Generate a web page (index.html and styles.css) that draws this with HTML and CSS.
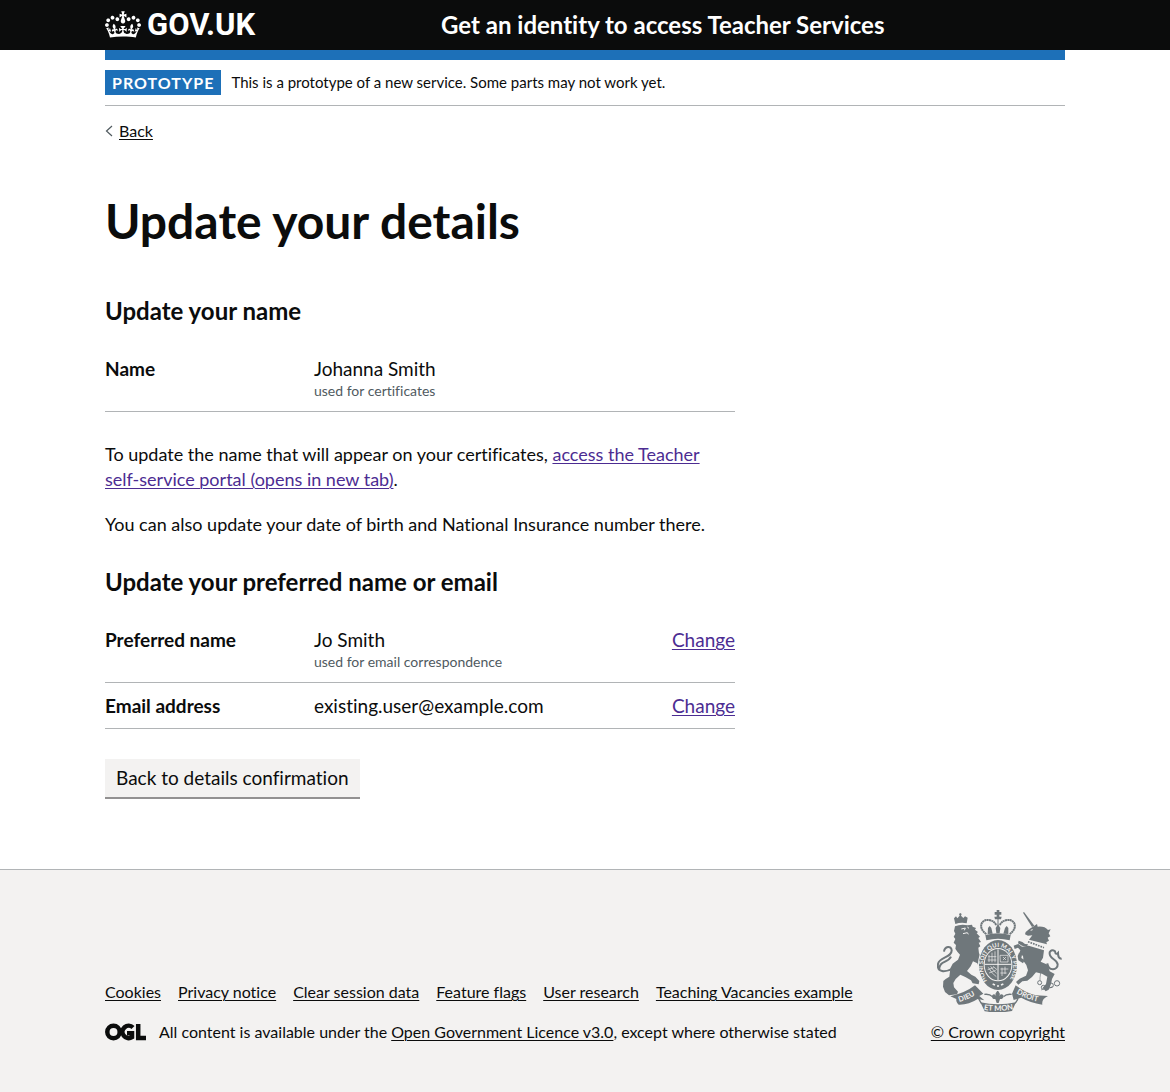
FILE: index.html
```html
<!DOCTYPE html>
<html lang="en">
<head>
<meta charset="utf-8">
<meta name="viewport" content="width=device-width, initial-scale=1">
<title>Update your details - Get an identity to access Teacher Services</title>
<link rel="stylesheet" href="styles.css">
</head>
<body>
<header class="header">
  <div class="container header-inner">
    <a class="header-logo" href="#">
      <svg class="crown" viewBox="0 0 132 97" aria-hidden="true"><path fill="currentColor" fill-rule="evenodd" d="M25 30.2c3.5 1.5 7.7-.2 9.1-3.7 1.5-3.6-.2-7.8-3.9-9.2-3.6-1.4-7.6.3-9.1 3.9-1.4 3.5.3 7.5 3.9 9zM9 39.5c3.6 1.5 7.8-.2 9.2-3.7 1.5-3.6-.2-7.8-3.9-9.1-3.6-1.5-7.6.2-9.1 3.8-1.4 3.5.3 7.5 3.8 9zM4.4 57.2c3.5 1.5 7.7-.2 9.1-3.8 1.5-3.6-.2-7.7-3.9-9.1-3.5-1.5-7.6.3-9.1 3.8-1.4 3.5.3 7.6 3.9 9.1zm38.3-21.4c3.5 1.5 7.7-.2 9.1-3.8 1.5-3.6-.2-7.7-3.9-9.1-3.6-1.5-7.6.3-9.1 3.8-1.3 3.6.4 7.7 3.9 9.1zm64.4-5.6c-3.6 1.5-7.8-.2-9.1-3.7-1.5-3.6.2-7.8 3.8-9.2 3.6-1.4 7.7.3 9.2 3.9 1.3 3.5-.4 7.5-3.9 9zm15.9 9.3c-3.6 1.5-7.7-.2-9.1-3.7-1.5-3.6.2-7.8 3.7-9.1 3.6-1.5 7.7.2 9.2 3.8 1.5 3.5-.3 7.5-3.8 9zm4.7 17.7c-3.6 1.5-7.8-.2-9.2-3.8-1.5-3.6.2-7.7 3.9-9.1 3.6-1.5 7.7.3 9.2 3.8 1.3 3.5-.4 7.6-3.9 9.1zM89.3 35.8c-3.6 1.5-7.8-.2-9.2-3.8-1.4-3.6.2-7.7 3.9-9.1 3.6-1.5 7.7.3 9.2 3.8 1.4 3.6-.3 7.7-3.9 9.1zM69.7 17.7l8.9 4.7V9.3l-8.9 2.8c-.2-.3-.5-.6-.9-.9L72.4 0H59.6l3.5 11.2c-.3.3-.6.5-.9.9l-8.8-2.8v13.1l8.8-4.7c.3.3.6.7.9.9l-5 15.4v.1c-.2.8-.4 1.6-.4 2.4 0 4.1 3.1 7.5 7 8.1h.2c.3 0 .7.1 1 .1.4 0 .7 0 1-.1h.2c4-.6 7.1-4.1 7.1-8.1 0-.8-.1-1.7-.4-2.4V34l-5.1-15.4c.4-.2.7-.6 1-.9zM66 92.8c16.9 0 32.8 1.1 47.1 3.2 4-16.9 8.9-26.7 14-33.5l-9.6-3.4c1 4.9 1.1 7.2 0 10.2-1.5-1.4-3-4.3-4.2-8.7L108.6 76c2.8-2 5-3.2 7.5-3.3-4.4 9.4-10 11.9-13.6 11.2-4.3-.8-6.3-4.6-5.6-7.9 1-4.7 5.7-5.9 8-.5 4.3-8.7-3-11.4-7.6-8.8 7.1-7.2 7.9-13.5 2.1-21.1-8 6.1-8.1 12.3-4.5 20.8-4.7-5.4-12.1-2.5-9.5 6.2 3.4-5.2 7.9-2 7.2 3.1-.6 4.3-6.4 7.8-13.5 7.2-10.3-.9-10.9-8-11.2-13.8 2.5-.5 7.1 1.8 11 7.3L80.2 60c-4.1 4.4-8 5.3-12.3 5.4 1.4-4.4 8-11.6 8-11.6H55.5s6.4 7.2 7.9 11.6c-4.2-.1-8-1-12.3-5.4l1.4 16.4c3.9-5.5 8.5-7.7 10.9-7.3-.3 5.8-.9 12.8-11.1 13.8-7.2.6-12.9-2.9-13.5-7.2-.7-5 3.8-8.3 7.1-3.1 2.7-8.7-4.6-11.6-9.4-6.2 3.7-8.5 3.6-14.7-4.6-20.8-5.8 7.6-5 13.9 2.2 21.1-4.7-2.6-11.9.1-7.7 8.8 2.3-5.5 7.1-4.2 8.1.5.7 3.3-1.3 7.1-5.7 7.9-3.5.7-9-1.8-13.5-11.2 2.5.1 4.7 1.3 7.5 3.3l-4.7-15.4c-1.2 4.4-2.7 7.2-4.3 8.7-1.1-3-.9-5.3 0-10.2l-9.5 3.4c5 6.9 9.9 16.7 14 33.5 14.8-2.1 30.8-3.2 47.7-3.2z"/></svg>
      <span>GOV.UK</span>
    </a>
    <a class="header-service" href="#">Get an identity to access Teacher Services</a>
  </div>
</header>

<div class="container">
  <div class="phase-banner">
    <strong class="tag">PROTOTYPE</strong>
    <span>This is a prototype of a new service. Some parts may not work yet.</span>
  </div>
  <a class="back-link" href="#">
    <svg viewBox="0 0 8 12" aria-hidden="true"><path d="M7 1L1.500 6L7 11" fill="none" stroke="currentColor" stroke-width="1.200"/></svg>
    <span>Back</span>
  </a>

  <main class="main">
    <div class="main-column">
      <h1>Update your details</h1>

      <h2>Update your name</h2>
      <dl class="summary">
        <div class="summary-row">
          <dt>Name</dt>
          <dd>Johanna Smith<span class="hint">used for certificates</span></dd>
        </div>
      </dl>

      <p>To update the name that will appear on your certificates, <a class="link" href="#">access the Teacher self-service portal (opens in new tab)</a>.</p>
      <p>You can also update your date of birth and National Insurance number there.</p>

      <h2 class="next-section">Update your preferred name or email</h2>
      <dl class="summary">
        <div class="summary-row">
          <dt>Preferred name</dt>
          <dd>Jo Smith<span class="hint">used for email correspondence</span></dd>
          <dd class="action"><a class="link" href="#" aria-label="Change preferred name">Change</a></dd>
        </div>
        <div class="summary-row">
          <dt>Email address</dt>
          <dd>existing.user@example.com</dd>
          <dd class="action"><a class="link" href="#" aria-label="Change email address">Change</a></dd>
        </div>
      </dl>

      <button class="button" type="button">Back to details confirmation</button>
    </div>
  </main>
</div>

<footer class="footer">
  <div class="container footer-inner">
    <div class="footer-meta">
      <ul class="footer-links">
        <li><a href="#">Cookies</a></li>
        <li><a href="#">Privacy notice</a></li>
        <li><a href="#">Clear session data</a></li>
        <li><a href="#">Feature flags</a></li>
        <li><a href="#">User research</a></li>
        <li><a href="#">Teaching Vacancies example</a></li>
      </ul>
      <div class="licence">
        <svg class="ogl" viewBox="0 0 41 18" role="img" aria-label="Open Government Licence">
          <g fill="none" stroke="currentColor" stroke-width="4.500">
            <circle cx="8.500" cy="9" r="6.200"/>
            <path d="M28 4.500A6.200 6.200 0 1 0 27 14.200V10.200H22M33.200 1V15H41"/>
          </g>
        </svg>
        <span>All content is available under the <a href="#">Open Government Licence v3.0</a>, except where otherwise stated</span>
      </div>
    </div>
    <a class="copyright" href="#">
      <svg class="crest" viewBox="36 30 375 306" aria-hidden="true">
        <defs>
          <path id="garter" d="M189 246A45 60 0 1 1 249 246"/>
          <path id="scroll-left" d="M103 306Q136 297 164 275"/>
          <path id="scroll-mid" d="M176 329Q218 337 268 327"/>
          <path id="scroll-right" d="M274 280Q304 298 345 306"/>
        </defs>
        <g fill="currentColor">
          <!-- lion with its crown -->
          <path d="M91 72L87 55L93 49L97 55L104 47L102 42L106 39L110 42L108 47L115 54L120 49L128 53L125 70Q108 66 91 72Z"/>
          <path d="M90 79Q108 71 128 76L141 74L143 80L153 84L150 89L159 96L155 100L165 110L160 114L168 126L161 128L166 139L160 143L162 160L173 180L171 207L180 224L168 216L157 190L144 184L137 199L126 213L139 224L151 230L163 243L161 253L143 250L138 241L121 231L106 224L92 237L85 249L87 262L99 275L96 283L72 286L60 276L54 260L55 243L62 237L73 230L76 205L83 191L99 179L105 164L97 155L91 146L93 135L86 128L91 117L86 110L91 101L87 93Z"/>
          <!-- central crown -->
          <path d="M215 30H223V36H229V44H223V50H230L228 58H210L208 50H215V44H209V36H215Z"/>
          <path d="M181 105Q219 95 257 105L254 121Q219 111 184 121Z"/>
          <path d="M188 102L189 84L194 78L199 84L203 101ZM214 99L212 84L219 73L226 84L224 99ZM235 101L240 84L245 78L250 84L250 102Z"/>
          <!-- unicorn -->
          <path d="M297 36L328 77L321 81L294 38Z"/>
          <path d="M326 79L336 72L338 80Q359 78 369 90L377 88L371 100L376 109L368 113L372 122L364 127L366 133L312 119L322 106L309 107L300 103L302 96L313 87Z"/>
          <path d="M311 137L357 151L354 173L347 185L368 194L374 214L389 222L381 237L378 252L371 269L362 274L353 263L363 252L367 230L351 221L333 217L321 231L307 242L292 244L280 254L273 246L284 236L303 227L309 211L304 195L296 184L294 168L283 159L286 151L279 143L269 147L266 137L280 132L291 140Z"/>
          <path d="M281 122L292 126L300 132L309 133L306 140L291 137L279 130ZM282 158L292 160L289 174L299 180L294 190L280 181L278 168Z"/>
          <!-- motto scroll -->
          <path d="M76 289Q122 278 150 256L175 281L163 288L178 301L158 297Q131 315 101 314Q92 305 94 297Z"/>
          <path d="M272 256Q303 280 333 286L369 288Q349 297 352 314Q315 308 289 293L266 300L261 281Z"/>
          <path d="M166 307Q219 319 273 307L261 333Q219 341 179 334Z"/>
          <!-- plant beneath the shield -->
          <path d="M218 270L225 282L222 289Q228 278 236 287Q236 297 225 297L221 309H215L211 297Q200 298 201 287Q208 278 214 289L211 282Z"/>
        </g>
        <g fill="none" stroke="currentColor">
          <path stroke-width="6" stroke-dasharray="6 1" d="M184 102C157 83 169 58 190 60Q207 61 214 76M254 102C281 83 269 58 248 60Q231 61 224 76"/>
          <path stroke-width="3" d="M219 57V78"/>
          <path stroke-width="6" d="M85 205C60 218 35 218 39 192C43 170 81 174 80 151C79 136 59 138 57 155M43 211C40 182 69 190 78 170"/>
          <path stroke-width="6" d="M367 190C370 215 399 211 398 193C397 177 370 177 374 157Q380 146 390 154Q392 166 399 159Q399 177 410 176"/>
          <path stroke-width="2" d="M348 270Q364 266 369 253M359 261Q377 269 382 258M347 219Q344 236 345 242"/>
          <g stroke-width="3"><circle cx="344" cy="248" r="6"/><circle cx="355" cy="262" r="6"/><circle cx="378" cy="256" r="7"/><circle cx="396" cy="250" r="8"/><circle cx="358" cy="209" r="5"/></g>
          <path stroke-width="5" stroke-dasharray="5 3" d="M309 125L357 143"/>
          <path stroke-width="4" d="M162 276Q154 289 169 310M275 276Q286 293 270 310M178 283Q194 281 202 290M260 283Q244 281 236 290"/>
        </g>
        <!-- garter and quartered shield -->
        <ellipse cx="219" cy="195" rx="60" ry="78" class="crest-gap"/>
        <ellipse cx="219" cy="195" rx="57" ry="75" fill="currentColor"/>
        <ellipse cx="219" cy="194" rx="43" ry="50" class="crest-gap"/>
        <ellipse cx="219" cy="194" rx="40" ry="47" fill="currentColor"/>
        <g class="crest-light">
          <path d="M219 148V240M179 193H259" stroke-width="3"/>
          <path d="M190 170H214M188 180H214M192 165V186M201 158V187M210 154V187M226 207H250M226 219H245M231 203V228M240 200V222M225 166H249V186H226ZM234 171L243 180M243 171L234 180M190 202Q201 222 214 230M197 199Q205 213 215 220M204 199L216 209M188 209L206 203M192 219L212 211" stroke-width="2"/>
          <path d="M203 252L210 255M228 255L235 252M216 258H222" stroke-width="5"/>
        </g>
        <g class="crest-text">
          <text font-size="18"><textPath href="#garter" startOffset="4">HONI SOIT QUI MAL Y PENSE</textPath></text>
          <text font-size="22"><textPath href="#scroll-left">DIEU</textPath></text>
          <text font-size="23"><textPath href="#scroll-mid">ET MON</textPath></text>
          <text font-size="22"><textPath href="#scroll-right">DROIT</textPath></text>
        </g>
        <g class="crest-light"><path d="M109 87L121 84L118 91M127 81L132 85M114 101L127 98L130 103M317 91L323 89" stroke-width="3"/></g>
      </svg>
      <span>© Crown copyright</span>
    </a>
  </div>
</footer>
</body>
</html>
```
FILE: styles.css
```css
* {
  box-sizing: border-box;
}

html {
  background: #f3f2f1;
}

body {
  margin: 0;
  background: #fff;
  color: #0b0c0c;
  font-family: Lato, "Liberation Sans", sans-serif;
  font-size: 19px;
  line-height: 25px;
  font-variant-ligatures: none;
}

.container {
  max-width: 960px;
  margin: 0 auto;
}

a {
  color: inherit;
  text-decoration-thickness: 1px;
  text-underline-offset: 2px;
}

h1,
h2,
p,
dl,
dd,
ul {
  margin: 0;
  padding: 0;
}

/* Header */

.header {
  background: #0b0c0c;
  color: #fff;
}

.header-inner {
  display: flex;
  align-items: center;
  height: 50px;
  padding-bottom: 2px;
}

.header a {
  text-decoration: none;
  font-weight: 700;
}

.header-logo {
  display: flex;
  align-items: center;
  gap: 6px;
  width: 35%;
  font-size: 31px;
  font-family: Roboto, "Liberation Sans", sans-serif;
}

.crown {
  width: 36px;
  height: 27px;
}

.header-service {
  font-size: 24px;
}

/* Phase banner and back link */

.phase-banner {
  display: flex;
  align-items: center;
  gap: 10px;
  padding: 10px 0;
  border-top: 10px solid #1d70b8;
  border-bottom: 1px solid #b1b4b6;
  font-size: 15px;
}

.tag {
  padding: 0 7px;
  background: #1d70b8;
  color: #fff;
  font-size: 16px;
  letter-spacing: 1px;
}

.back-link {
  display: inline-flex;
  align-items: center;
  gap: 6px;
  margin-top: 15px;
  font-size: 16px;
  line-height: 20px;
  vertical-align: top;
  text-decoration: none;
}

.back-link span {
  text-decoration: underline 1px;
}

.back-link svg {
  width: 8px;
  height: 12px;
  color: #505a5f;
}

/* Main content */

.main {
  display: grid;
  grid-template-columns: minmax(0, 2fr) minmax(0, 1fr);
  gap: 15px;
  padding: 55px 0 70px;
}

h1 {
  margin-bottom: 50px;
  font-size: 48px;
  line-height: 50px;
}

h2 {
  margin-bottom: 20px;
  font-size: 24px;
  line-height: 30px;
}

.next-section {
  padding-top: 10px;
}

p {
  margin-bottom: 20px;
  font-size: 18px;
}

.link {
  color: #4c2c92;
}

.summary {
  margin-bottom: 30px;
}

.summary-row {
  display: grid;
  grid-template-columns: 30% 1fr auto;
  column-gap: 20px;
  padding: 10px 0;
  border-bottom: 1px solid #b1b4b6;
}

dt {
  font-weight: 700;
}

.hint {
  display: block;
  color: #505a5f;
  font-size: 14px;
  line-height: 20px;
}

.button {
  display: block;
  padding: 6px 11px 7px;
  border: 0;
  border-bottom: 2px solid #929191;
  background: #f3f2f1;
  color: #0b0c0c;
  font: inherit;
}

/* Footer */

.footer {
  padding: 40px 0 50px;
  border-top: 1px solid #b1b4b6;
  background: #f3f2f1;
  font-size: 16px;
  line-height: 20px;
}

.footer-inner {
  display: flex;
  align-items: flex-end;
  justify-content: space-between;
}

.footer-links {
  display: flex;
  flex-wrap: wrap;
  gap: 17px;
  margin-bottom: 20px;
  list-style: none;
}

.licence {
  display: flex;
  align-items: center;
  gap: 13px;
}

.ogl {
  width: 41px;
  height: 18px;
}

.copyright {
  display: flex;
  flex-direction: column;
  align-items: flex-end;
  gap: 10px;
}

.crest {
  width: 125px;
  height: 102px;
  margin-right: 3px;
  color: #6f777b;
}

.crest-gap {
  fill: #f3f2f1;
}

.crest-light {
  fill: none;
  stroke: #f3f2f1;
}

.crest-text {
  fill: #f3f2f1;
  font-weight: 700;
}
```
